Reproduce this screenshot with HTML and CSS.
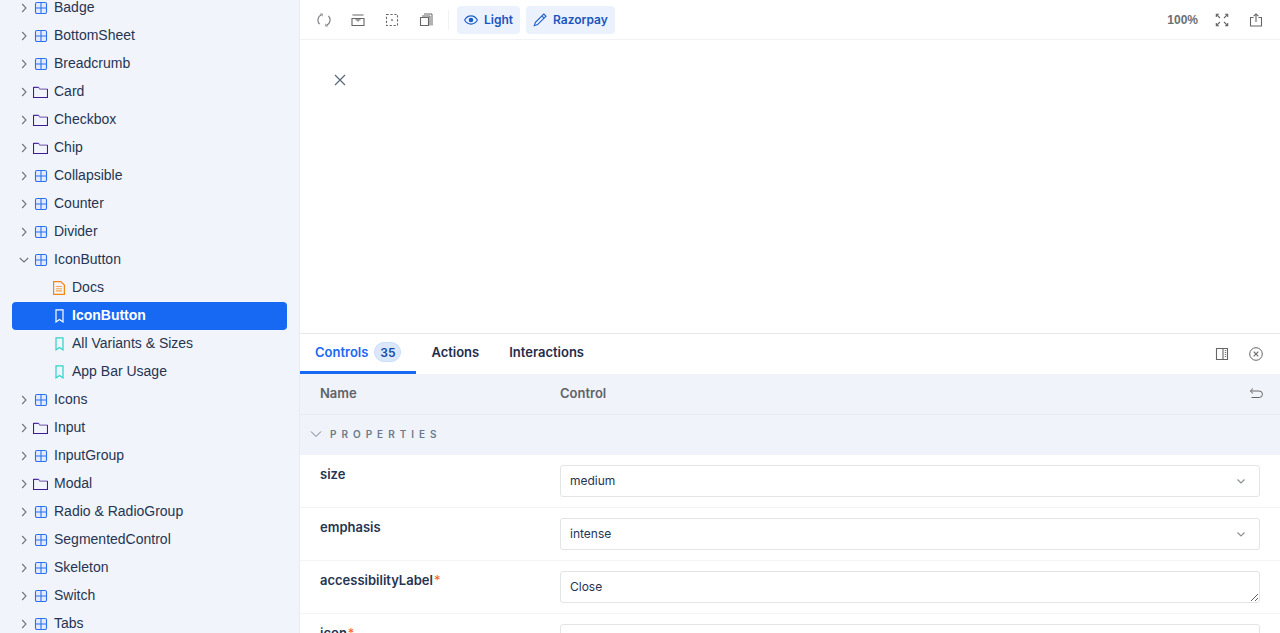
FILE: index.html
```html
<!DOCTYPE html>
<html lang="en">
<head>
<meta charset="utf-8">
<title>IconButton</title>
<link rel="stylesheet" href="styles.css">
</head>
<body>
<svg class="defs" width="0" height="0" aria-hidden="true">
  <defs>
    <symbol id="comp" viewBox="0 0 14 14"><rect x="2" y="2" width="10" height="10" rx="1.5" fill="#e3ecfd" stroke="none"/><path d="M3 1.500h8A1.500 1.500 0 0 1 12.500 3v8a1.500 1.500 0 0 1-1.500 1.500H3A1.500 1.500 0 0 1 1.500 11V3A1.500 1.500 0 0 1 3 1.500zM7 1.500v11M1.500 7h11" fill="none" stroke="#2f6fed" stroke-width="1.100"/></symbol>
    <symbol id="folder" viewBox="0 0 15 14"><path d="M.5 2.500h5.200l1.300 1.600h7.500" fill="none" stroke="#8a6fc0" stroke-width="1.100"/><path d="M.5 2v10.500h14V4.100M.5 2.200h5" fill="none" stroke="#3a1d96" stroke-width="1.100"/></symbol>
    <symbol id="arrow" viewBox="0 0 10 10"><path d="M3.200 1 7 5 3.200 9" fill="none" stroke="#6f7378" stroke-width="1.100"/></symbol>
    <symbol id="down" viewBox="0 0 10 10"><path d="M.8 3l4.200 4 4.200-4" fill="none" stroke="#6f7378" stroke-width="1.100"/></symbol>
    <symbol id="bookmark" viewBox="0 0 9 14"><path d="M1 .9h7v12L4.500 10.400 1 12.900z" fill="none" stroke="currentColor" stroke-width="1.200"/></symbol>
  </defs>
</svg>
<div class="app">
  <nav class="sidebar">
    <ul class="tree">
      <li class="row"><svg class="arr"><use href="#arrow"/></svg><svg class="ico"><use href="#comp"/></svg><span>Badge</span></li>
      <li class="row"><svg class="arr"><use href="#arrow"/></svg><svg class="ico"><use href="#comp"/></svg><span>BottomSheet</span></li>
      <li class="row"><svg class="arr"><use href="#arrow"/></svg><svg class="ico"><use href="#comp"/></svg><span>Breadcrumb</span></li>
      <li class="row"><svg class="arr"><use href="#arrow"/></svg><svg class="ico ico-folder"><use href="#folder"/></svg><span>Card</span></li>
      <li class="row"><svg class="arr"><use href="#arrow"/></svg><svg class="ico ico-folder"><use href="#folder"/></svg><span>Checkbox</span></li>
      <li class="row"><svg class="arr"><use href="#arrow"/></svg><svg class="ico ico-folder"><use href="#folder"/></svg><span>Chip</span></li>
      <li class="row"><svg class="arr"><use href="#arrow"/></svg><svg class="ico"><use href="#comp"/></svg><span>Collapsible</span></li>
      <li class="row"><svg class="arr"><use href="#arrow"/></svg><svg class="ico"><use href="#comp"/></svg><span>Counter</span></li>
      <li class="row"><svg class="arr"><use href="#arrow"/></svg><svg class="ico"><use href="#comp"/></svg><span>Divider</span></li>
      <li class="row"><svg class="arr"><use href="#down"/></svg><svg class="ico"><use href="#comp"/></svg><span>IconButton</span></li>
      <li class="row child"><svg class="doc" viewBox="0 0 12 14"><path d="M.6.600h7.200l3.600 3.400v9.400H.6z" fill="none" stroke="#f5860f" stroke-width="1.200"/><path d="M3 5.500h6M3 7.700h6M3 9.900h6" stroke="#f5a54a" stroke-width="1.100"/></svg><span>Docs</span></li>
      <li class="row child selected"><svg class="story"><use href="#bookmark"/></svg><span>IconButton</span></li>
      <li class="row child"><svg class="story"><use href="#bookmark"/></svg><span>All Variants &amp; Sizes</span></li>
      <li class="row child"><svg class="story"><use href="#bookmark"/></svg><span>App Bar Usage</span></li>
      <li class="row"><svg class="arr"><use href="#arrow"/></svg><svg class="ico"><use href="#comp"/></svg><span>Icons</span></li>
      <li class="row"><svg class="arr"><use href="#arrow"/></svg><svg class="ico ico-folder"><use href="#folder"/></svg><span>Input</span></li>
      <li class="row"><svg class="arr"><use href="#arrow"/></svg><svg class="ico"><use href="#comp"/></svg><span>InputGroup</span></li>
      <li class="row"><svg class="arr"><use href="#arrow"/></svg><svg class="ico ico-folder"><use href="#folder"/></svg><span>Modal</span></li>
      <li class="row"><svg class="arr"><use href="#arrow"/></svg><svg class="ico"><use href="#comp"/></svg><span>Radio &amp; RadioGroup</span></li>
      <li class="row"><svg class="arr"><use href="#arrow"/></svg><svg class="ico"><use href="#comp"/></svg><span>SegmentedControl</span></li>
      <li class="row"><svg class="arr"><use href="#arrow"/></svg><svg class="ico"><use href="#comp"/></svg><span>Skeleton</span></li>
      <li class="row"><svg class="arr"><use href="#arrow"/></svg><svg class="ico"><use href="#comp"/></svg><span>Switch</span></li>
      <li class="row"><svg class="arr"><use href="#arrow"/></svg><svg class="ico"><use href="#comp"/></svg><span>Tabs</span></li>
    </ul>
  </nav>
  <main class="main">
    <header class="toolbar">
      <div class="tools">
        <button class="tool"><svg viewBox="0 0 14 14"><path d="M2.600 11.200A6 6 0 0 1 4.200 1.700M11.400 2.800a6 6 0 0 1-1.600 9.500" fill="none" stroke="#73777d" stroke-width="1.100"/><path d="M2.500.6h3.300v3.200zM11.500 13.400H8.200v-3.200z" fill="#9a9da2"/></svg></button>
        <button class="tool"><svg viewBox="0 0 14 14"><path d="M1.500 2h11M1 5.500h12v7H1z" fill="none" stroke="#666" stroke-width="1.100"/><path d="M4.500 6v1.500h1.500v1h2v-1h1.500V6z" fill="#999"/></svg></button>
        <button class="tool"><svg viewBox="0 0 14 14"><path d="M1.500 1.500h11v11h-11z" fill="none" stroke="#666" stroke-width="1.100" stroke-dasharray="2.200 1.750"/><rect x="6.200" y="6.200" width="1.600" height="1.600" fill="#666"/></svg></button>
        <button class="tool"><svg viewBox="0 0 14 14"><path d="M1.500 4.500h8v8h-8z" fill="none" stroke="#666" stroke-width="1.100"/><path d="M3 3h8v9.500M5 1h8v11.500" fill="none" stroke="#666" stroke-width="1"/></svg></button>
        <span class="sep"></span>
        <button class="pill"><svg viewBox="0 0 14 14"><path d="M.6 7C2.200 4.200 4.400 2.900 7 2.900S11.800 4.200 13.400 7C11.800 9.800 9.600 11.100 7 11.100S2.200 9.800.6 7z" fill="none" stroke="#1d5fc9" stroke-width="1.100"/><circle cx="7" cy="7" r="2.300" fill="#1d5fc9"/></svg>Light</button>
        <button class="pill"><svg viewBox="0 0 14 14"><path d="M10.800 1 13 3.200 4.600 11.600 1.300 12.700 2.400 9.400z" fill="none" stroke="#1d5fc9" stroke-width="1.100"/><path d="M8.900 2.900l2.200 2.200" stroke="#1d5fc9" stroke-width="1.100"/></svg>Razorpay</button>
      </div>
      <div class="tools">
        <span class="zoom">100%</span>
        <button class="tool"><svg viewBox="0 0 14 14"><path d="M1.800 1.800 5 5M1.300 4V1.300H4M12.200 1.800 9 5M10 1.300h2.700V4M1.800 12.200 5 9M1.300 10v2.700H4M12.200 12.200 9 9M10 12.700h2.700V10" fill="none" stroke="#666" stroke-width="1.100"/></svg></button>
        <button class="tool"><svg viewBox="0 0 14 14"><path d="M4.500 4.500H1.500V13h11V4.500H9.500" fill="none" stroke="#666" stroke-width="1.100"/><path d="M7 9V1M4.600 3.200 7 .9l2.400 2.300" fill="none" stroke="#666" stroke-width="1.100"/></svg></button>
      </div>
    </header>
    <section class="preview">
      <svg class="close" viewBox="0 0 12 12"><path d="M1 1l10 10M11 1 1 11" fill="none" stroke="#5c6b7f" stroke-width="1.300"/></svg>
    </section>
    <section class="panel">
      <div class="tabbar">
        <div class="tabs">
          <div class="tab active">Controls<span class="badge">35</span></div>
          <div class="tab">Actions</div>
          <div class="tab">Interactions</div>
        </div>
        <div class="panel-actions">
          <svg viewBox="0 0 14 14"><path d="M1.500 1.500h11v11h-11zM8 1.500v11" fill="none" stroke="#666" stroke-width="1.100"/><path d="M9.800 3.500h1.400M9.800 5.500h1.400M9.800 7.500h1.400M9.800 9.500h1.400" stroke="#777" stroke-width="1"/></svg>
          <svg viewBox="0 0 14 14"><circle cx="7" cy="7" r="6.300" fill="none" stroke="#666" stroke-width="1"/><path d="M4.700 4.700l4.600 4.600M9.300 4.700 4.700 9.300" stroke="#666" stroke-width="1.100"/></svg>
        </div>
      </div>
      <div class="head-row">
        <div class="col-name">Name</div>
        <div class="col-control">Control</div>
        <svg class="undo" viewBox="0 0 14 14"><path d="M4 1.500 1.300 4 4 6.500M1.500 4h8.700a2.800 2.800 0 0 1 0 6.500H2.500" fill="none" stroke="#666" stroke-width="1"/></svg>
      </div>
      <div class="section-row">
        <svg viewBox="0 0 12 8"><path d="M1 1.500l5 5 5-5" fill="none" stroke="#6d7a8c" stroke-width="1"/></svg>
        <span>PROPERTIES</span>
      </div>
      <div class="prop">
        <div class="prop-name">size</div>
        <div class="select-wrap"><select class="field"><option>medium</option></select><svg viewBox="0 0 10 10"><path d="M1.500 3.500 5 7l3.500-3.500" fill="none" stroke="#8c8f94" stroke-width="1.200"/></svg></div>
      </div>
      <div class="prop">
        <div class="prop-name">emphasis</div>
        <div class="select-wrap"><select class="field"><option>intense</option></select><svg viewBox="0 0 10 10"><path d="M1.500 3.500 5 7l3.500-3.500" fill="none" stroke="#8c8f94" stroke-width="1.200"/></svg></div>
      </div>
      <div class="prop">
        <div class="prop-name">accessibilityLabel<span class="req">*</span></div>
        <textarea class="field area" rows="1">Close</textarea>
      </div>
      <div class="prop">
        <div class="prop-name">icon<span class="req">*</span></div>
        <div class="field"></div>
      </div>
    </section>
  </main>
</div>
</body>
</html>
```
FILE: styles.css
```css
* { box-sizing: border-box; }
html, body { margin: 0; height: 100%; overflow: hidden; }
body { font-family: Inter, "Liberation Sans", sans-serif; color: #263451; background: #fff; }
.defs { position: absolute; }
.app { display: flex; height: 633px; overflow: hidden; }

.sidebar { width: 300px; flex: none; background: #f1f4fb; border-right: 1px solid #e8eaee; overflow: hidden; }
.tree { list-style: none; margin: -6px 12px 0 12px; padding: 0; font-family: "Liberation Sans", sans-serif; }
.row { display: flex; align-items: center; height: 28px; font-size: 14px; padding-left: 7px; padding-bottom: 2px; border-radius: 4px; white-space: nowrap; }
.row .arr { width: 10px; height: 10px; flex: none; margin-right: 5px; margin-top: 2px; }
.row .ico { width: 14px; height: 14px; flex: none; margin-right: 6px; margin-top: 2px; }
.row .ico-folder { width: 15px; margin-left: -1px; }
.row.child { padding-left: 41px; }
.row .doc { width: 12px; height: 14px; flex: none; margin-right: 7px; margin-top: 2px; }
.row .story { width: 9px; height: 14px; flex: none; margin: 2px 8px 0 2px; color: #2ed3c9; }
.row.selected { background: #1768f3; color: #fff; font-weight: 700; }
.row.selected .story { color: #fff; }

.main { flex: 1; min-width: 0; display: flex; flex-direction: column; }
.toolbar { height: 40px; flex: none; display: flex; justify-content: space-between; align-items: center; border-bottom: 1px solid #f1f2f4; padding: 0 7px; }
.tools { display: flex; align-items: center; }
.tool { width: 34px; height: 28px; border: 0; background: none; padding: 0; display: flex; align-items: center; justify-content: center; }
.tool svg { width: 14px; height: 14px; }
.sep { width: 1px; height: 20px; background: #f1f2f4; margin: 0 8px 0 5px; }
.pill { height: 28px; border: 0; border-radius: 4px; background: #ebf2fe; color: #1a55c0; font: 600 12px Inter, sans-serif; display: flex; align-items: center; gap: 6px; padding: 0 7px; margin-right: 6px; }
.pill svg { width: 14px; height: 14px; }
.zoom { font: 700 12px "Liberation Sans", sans-serif; color: #6b6f75; margin-right: 7px; }

.preview { height: 293px; flex: none; padding: 34px 33px; }
.close { width: 12px; height: 12px; display: block; margin-left: 1px; }

.panel { flex: 1; min-height: 0; overflow: hidden; border-top: 1px solid #e6e8ec; }
.tabbar { height: 40px; display: flex; justify-content: space-between; align-items: stretch; }
.tabs { display: flex; }
.tab { display: flex; align-items: center; padding: 0 15px 1px; font-size: 13px; font-weight: 600; color: #1f2d4a; border-bottom: 3px solid transparent; }
.tab.active { color: #1768f3; border-bottom-color: #1768f3; }
.badge { display: inline-flex; align-items: center; justify-content: center; height: 20px; min-width: 27px; margin-left: 6px; border-radius: 10px; background: #dbe8fc; border: 1px solid #c9dcfa; color: #174bab; font-size: 12px; }
.panel-actions { display: flex; align-items: center; gap: 20px; padding-right: 17px; }
.panel-actions svg { width: 14px; height: 14px; }

.head-row { height: 41px; display: flex; align-items: center; background: #f0f3f9; border-bottom: 1px solid #e8ebf0; padding: 0 17px 3px 20px; font-size: 13px; font-weight: 600; color: #5f6368; }
.col-name { width: 240px; }
.col-control { flex: 1; }
.undo { width: 14px; height: 14px; margin-top: 2px; }
.section-row { height: 40px; display: flex; align-items: center; background: #f0f3f9; padding: 0 0 2px 10px; font-size: 10px; font-weight: 600; letter-spacing: 5px; color: #6d7a8c; }
.section-row svg { width: 12px; height: 8px; margin-right: 8px; }

.prop { height: 53px; display: flex; padding: 10px 20px 0; border-bottom: 1px solid #f3f4f6; }
.prop-name { width: 240px; flex: none; font-size: 13px; font-weight: 600; color: #263451; line-height: 18px; }
.req { color: #ff5c3a; font-weight: 400; margin-left: 1px; }
.field { display: block; width: 700px; height: 32px; border: 1px solid #e3e4e7; border-radius: 3px; background: #fff; padding: 0 9px 2px; font: 400 12px Inter, sans-serif; color: #263451; outline: 0; }
.select-wrap { position: relative; width: 700px; height: 32px; }
select.field { appearance: none; -webkit-appearance: none; }
.select-wrap svg { position: absolute; right: 14px; top: 11px; width: 10px; height: 10px; pointer-events: none; }
.area { resize: vertical; padding: 7px 9px; line-height: 15px; }
```
